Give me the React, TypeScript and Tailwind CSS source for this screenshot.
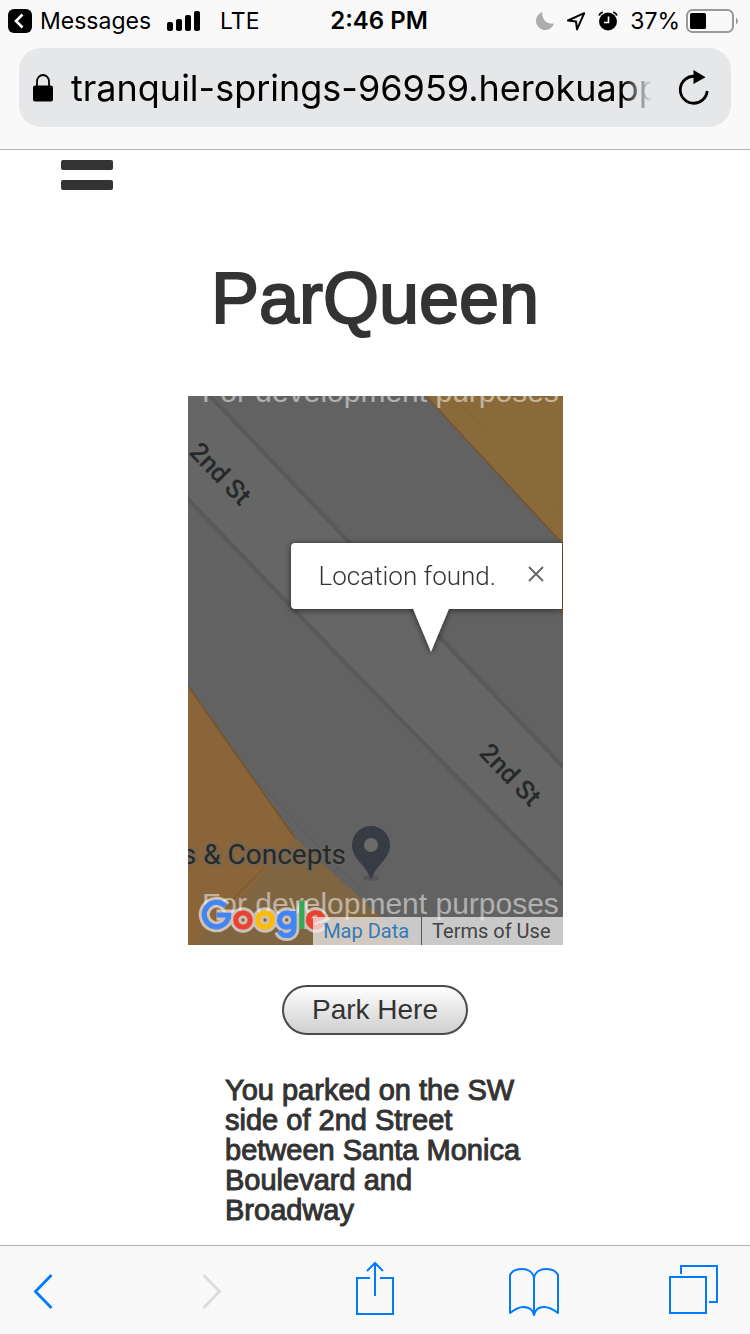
import React from "react";

function StatusBar() {
  return (
    <div className="grid h-[42px] grid-cols-[1fr_auto_1fr] items-center pl-2 text-[23px] leading-7">
      <div className="flex items-center">
        <svg width="24" height="24" viewBox="0 0 24 24" aria-hidden="true">
          <rect width="24" height="24" rx="6" />
          <path d="M14.500 5.500 8 12l6.500 6.500" fill="none" stroke="#fff" strokeWidth="2.600" />
        </svg>
        <span className="ml-2">Messages</span>
        <svg className="ml-4" width="33" height="20" viewBox="0 0 33 20" aria-hidden="true">
          <rect x="0" y="11" width="6" height="9" rx="2" />
          <rect x="9" y="8" width="6" height="12" rx="2" />
          <rect x="18" y="4" width="6" height="16" rx="2" />
          <rect x="27" y="0" width="6" height="20" rx="2" />
        </svg>
        <span className="ml-5">LTE</span>
      </div>
      <div className="text-[24px] font-semibold">2:46 PM</div>
      <div className="flex items-center justify-end">
        <svg width="18" height="18" viewBox="0 0 18 18" aria-hidden="true">
          <path d="M6.500 0A9.200 9.200 0 1 0 18 11.500 9.600 9.600 0 0 1 6.500 0Z" fill="#adadad" />
        </svg>
        <svg className="ml-3" width="20" height="20" viewBox="0 0 20 20" aria-hidden="true">
          <path d="M2 9.500 18.200 2.200 11 18.400 10 10.500Z" fill="none" stroke="#000" strokeWidth="2" strokeLinejoin="round" />
        </svg>
        <svg className="ml-3" width="20" height="20" viewBox="0 0 20 20" aria-hidden="true">
          <circle cx="10" cy="10.500" r="9" />
          <path d="M1 4.500Q2 2 4.800 1.200M19 4.500Q18 2 15.200 1.200" fill="none" stroke="#000" strokeWidth="1.800" />
          <path d="M10.500 5.500v6H6" fill="none" stroke="#fff" strokeWidth="1.600" />
        </svg>
        <span className="ml-3">37%</span>
        <svg className="ml-1.5 mr-2.5" width="54" height="24" viewBox="0 0 54 24" aria-hidden="true">
          <rect x="1" y="1" width="46" height="22" rx="5.500" fill="none" stroke="#999" strokeWidth="2" />
          <rect x="4" y="4" width="16" height="16" rx="1.500" />
          <path d="M50 8.500q4 3.500 0 7Z" fill="#999" />
        </svg>
      </div>
    </div>
  );
}

function AddressBar() {
  return (
    <div className="mx-[19px] mt-1.5 flex h-[79px] items-center rounded-[22px] bg-[#e6e7e9] pl-[14px] pr-[21px]">
      <svg className="shrink-0" width="20" height="28" viewBox="0 0 20 28" aria-hidden="true">
        <rect y="11.500" width="20" height="16" rx="2" />
        <path d="M4 13V7.500a6 6.500 0 0 1 12 0V13" fill="none" stroke="#000" strokeWidth="1.800" />
      </svg>
      <input
        aria-label="Address"
        readOnly
        defaultValue="tranquil-springs-96959.herokuapp.com"
        className="ml-[18px] h-14 min-w-0 flex-1 bg-transparent p-0 text-[36px] outline-none [mask-image:linear-gradient(to_right,#000_95%,transparent)]"
      />
      <button type="button" aria-label="Reload" className="ml-[26px] shrink-0">
        <svg width="32" height="36" viewBox="0 0 32 36" aria-hidden="true">
          <path d="M17 6.300A13.500 13.500 0 1 0 29.200 21" fill="none" stroke="#000" strokeWidth="2.800" />
          <path d="M15.500 0v14L27.500 7.300Z" />
        </svg>
      </button>
    </div>
  );
}

const logoStrokes = [
  { d: "M37.500 510.300A12.200 12.200 0 1 0 40.700 519H28.500", color: "#4285f4" },
  { d: "M62.200 524a7.200 7.200 0 1 0-14.400 0 7.200 7.200 0 1 0 14.400 0Z", color: "#ea4335" },
  { d: "M84.200 524a7.200 7.200 0 1 0-14.400 0 7.200 7.200 0 1 0 14.400 0Z", color: "#fbbc05" },
  { d: "M105.900 524a7.200 7.200 0 1 0-14.400 0 7.200 7.200 0 1 0 14.400 0ZM106 515V531Q106 539.500 98.500 539.500 93.500 539.500 91.500 535", color: "#4285f4" },
  { d: "M113.800 504.500V533", color: "#34a853" },
  { d: "M121.500 526.500 134.500 521A7.300 7.300 0 1 0 133.500 528.500", color: "#ea4335" },
];

function MapView() {
  return (
    <section aria-label="Map" className="relative h-[549px] w-1/2 overflow-hidden bg-[#626262] font-['Roboto',sans-serif]">
      <svg className="block h-full w-full" viewBox="0 0 375 549" preserveAspectRatio="xMidYMid slice" role="img" aria-label="Street map of 2nd St">
        <rect width="375" height="549" fill="#626262" />
        <path d="M0 0H22L161 146 282 273 375 371V489L164 274 0 103Z" fill="#666" />
        <path d="M20-2 161 146 282 273 378 374M-3 100 164 274 378 492" fill="none" stroke="#595959" strokeWidth="4" />
        <path d="M237-1 374 147V220H377V-1Z" fill="#8a6a3a" stroke="#76522f" strokeWidth="1.500" />
        <path d="M265 0 372 115" stroke="#806538" strokeWidth="1" />
        <path d="M0 290 107 442 144 476 222 549H0Z" fill="#8a653a" />
        <path d="M107 442 144 476 222 549H7L82 472Z" fill="#806543" />
        <path d="M0 290 107 442" stroke="#75532a" strokeWidth="1.500" />
        <path d="M72 388 150 471 226 549M150 471 146 476" fill="none" stroke="#595959" strokeWidth="1" />
        <path d="M76 472 41 507" stroke="#75532a" strokeWidth="1" />
        <g fill="#25292a" fontSize="26" fontWeight="500">
          <text transform="translate(0 57) rotate(46)">2nd St</text>
          <text transform="translate(290 358) rotate(46)">2nd St</text>
        </g>
        <text x="158" y="468" textAnchor="end" fontSize="28" fill="#24292c" stroke="#6b665e" strokeOpacity=".6" strokeWidth="4" paintOrder="stroke">
          s &amp; Concepts
        </text>
        <ellipse cx="183" cy="482" rx="8" ry="3" fill="#555" />
        <path d="M183 430a19 19 0 0 0-19 19c0 9 5 14 11 21 4 5 6 8 7 12h2c1-4 3-7 7-12 6-7 11-12 11-21a19 19 0 0 0-19-19Z" fill="#373c44" />
        <circle cx="183" cy="449" r="7" fill="#6b6b6b" />
        <g fill="#fff" fillOpacity=".5" fontSize="30" fontFamily="Liberation Sans, Arial, sans-serif">
          <text x="14" y="6">For development purposes</text>
          <text x="14" y="518">For development purposes</text>
        </g>
        <g fill="none" stroke="#fff" strokeWidth="11" opacity=".6">
          {logoStrokes.map(({ d }) => <path key={d} d={d} />)}
        </g>
        <g fill="none" strokeWidth="5.200">
          {logoStrokes.map(({ d, color }) => <path key={d} d={d} stroke={color} />)}
        </g>
      </svg>

      <div className="absolute left-[103px] right-px top-[147px] [filter:drop-shadow(0_1px_3px_rgba(0,0,0,0.6))]">
        <div className="flex h-[66px] items-center justify-between rounded-l-[4px] bg-white pl-7 pr-[18px]">
          <span className="text-[26px] font-light leading-8 text-[#333]">Location found.</span>
          <button type="button" aria-label="Close">
            <svg width="16" height="16" viewBox="0 0 16 16" className="mb-1" aria-hidden="true">
              <path d="m1 1 14 14M15 1 1 15" stroke="#666" strokeWidth="2" />
            </svg>
          </button>
        </div>
        <svg className="ml-[122px] block" width="36" height="43" viewBox="0 0 36 43" aria-hidden="true">
          <path d="M0 0H36L18 43Z" fill="#fff" />
        </svg>
      </div>

      <div className="absolute bottom-0 right-0 flex h-7 items-center bg-[#f5f5f5]/70 text-[20px] leading-[30px]">
        <a href="#map-data" className="border-r border-[#555] pl-2.5 pr-3 text-[#337ab7]">Map Data</a>
        <a href="#terms" className="pl-2.5 pr-3 text-[#444]">Terms of Use</a>
      </div>
    </section>
  );
}

function Toolbar() {
  return (
    <nav aria-label="Browser" className="flex h-[89px] items-center justify-between border-t border-[#b2b2b2] bg-[#f9f9f9] pl-[33px] pr-8 text-[#007aff]">
      <button type="button" aria-label="Back" className="w-[59px]">
        <svg width="20" height="38" viewBox="0 0 20 38" fill="none" stroke="currentColor" strokeWidth="2.800" aria-hidden="true">
          <path d="M18.500 4 2.500 20.500 18.500 37" />
        </svg>
      </button>
      <button type="button" aria-label="Forward" disabled className="w-[43px] text-[#dcdcdc]">
        <svg width="20" height="38" viewBox="0 0 20 38" fill="none" stroke="currentColor" strokeWidth="2.800" aria-hidden="true">
          <path d="M1.500 4 17.500 20.500 1.500 37" />
        </svg>
      </button>
      <button type="button" aria-label="Share" className="w-[43px] pb-1">
        <svg width="38" height="54" viewBox="0 0 38 54" fill="none" stroke="currentColor" strokeWidth="2" aria-hidden="true">
          <path d="M14 17H1V53H37V17H24M19 35V2M11 10 19 2 27 10" />
        </svg>
      </button>
      <button type="button" aria-label="Bookmarks" className="pt-1">
        <svg width="50" height="48" viewBox="0 0 50 48" fill="none" stroke="currentColor" strokeWidth="2" strokeLinejoin="round" aria-hidden="true">
          <path d="M25 10C24 4 19 1 13 1 8 1 3 3 1 7V45C5 42 9 39 14 39 20 39 24 42 25 47 26 42 29 39 35 39 41 39 45 42 49 45V7C47 3 42 1 37 1 31 1 26 4 25 10ZV47" />
        </svg>
      </button>
      <button type="button" aria-label="Tabs">
        <svg width="49" height="50" viewBox="0 0 49 50" fill="none" stroke="currentColor" strokeWidth="2" aria-hidden="true">
          <path d="M1 12H37V48H1ZM12 9V1H48V37H40" />
        </svg>
      </button>
    </nav>
  );
}

export default function App() {
  return (
    <div className="flex min-h-screen flex-col bg-white font-['Inter',sans-serif] text-black">
      <header className="h-[150px] border-b border-[#b2b2b2] bg-[#f9f9f9]">
        <StatusBar />
        <AddressBar />
      </header>

      <main className="flex flex-1 flex-col items-center pb-5 font-['Liberation_Sans',Arial,sans-serif] text-[#333]">
        <button type="button" aria-label="Open menu" className="ml-[61px] flex flex-col gap-2.5 self-start pt-2.5">
          <span className="block h-[10px] w-[52px] rounded-[2px] bg-[#333]" />
          <span className="block h-[10px] w-[52px] rounded-[2px] bg-[#333]" />
        </button>
        <h1 className="mt-[68px] text-[72px] leading-20 [-webkit-text-stroke:2px_#333]">ParQueen</h1>
        <div className="mt-[58px] flex w-full justify-center">
          <MapView />
        </div>
        <button type="button" className="mt-10 h-[50px] rounded-full border-2 border-[#4a4a4a] bg-linear-to-b from-white to-[#cfcfcf] px-7 text-[28px] leading-8">
          Park Here
        </button>
        <p className="mt-10 w-2/5 text-[29px] leading-[30px] [-webkit-text-stroke:1px_#333]">
          You parked on the SW side of 2nd Street between Santa Monica Boulevard and Broadway
        </p>
      </main>

      <Toolbar />
    </div>
  );
}
